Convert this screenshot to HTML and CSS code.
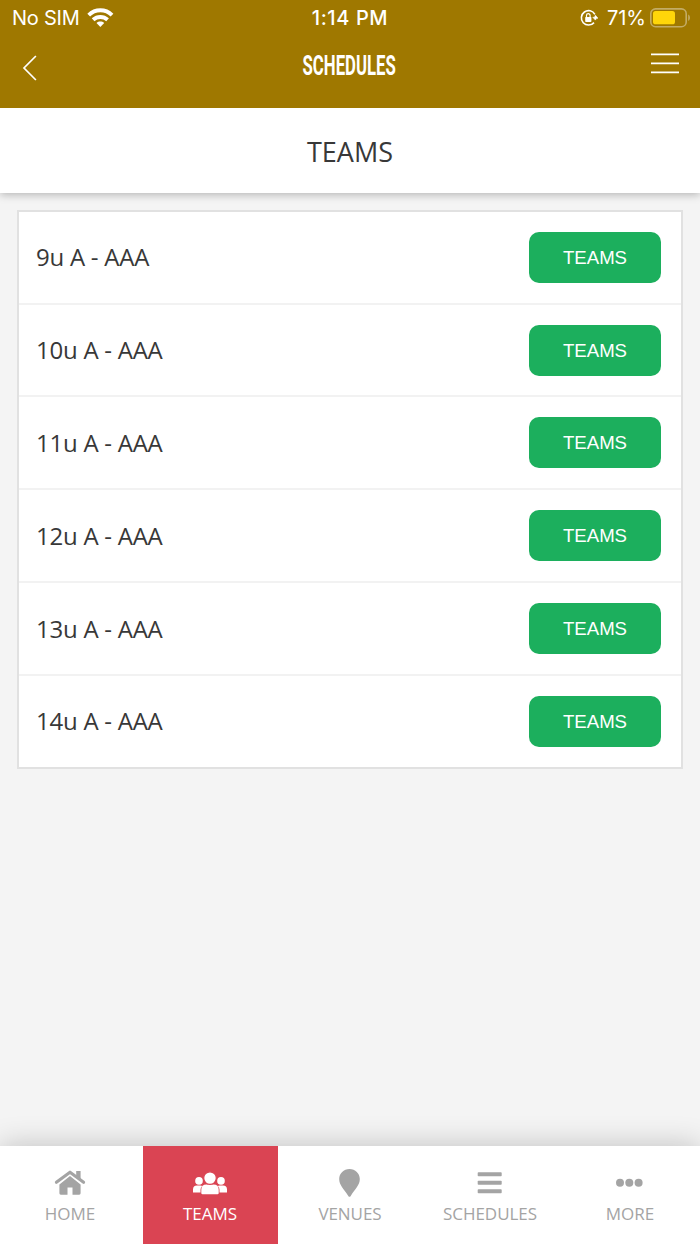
FILE: index.html
```html
<!DOCTYPE html>
<html lang="en">
<head>
<meta charset="utf-8">
<title>Schedules</title>
<link rel="stylesheet" href="styles.css">
</head>
<body>
<div class="app">
  <header class="top">
    <div class="status">
      <div class="carrier"><span class="sim">No SIM</span>
        <svg width="27" height="20" viewBox="0 0 27 20"><g fill="none" stroke="#fff" stroke-width="3.9"><path d="M1.7 7.1C8.2.7 18.5.7 25 7.1"/><path d="M6.1 11.8c4.1-3.8 10.4-3.8 14.5 0"/></g><path d="M9.5 15c2.3-1.9 5.4-1.9 7.7 0l-3.85 4z" fill="#fff"/></svg>
      </div>
      <div class="time">1:14 PM</div>
      <div class="power">
        <svg width="18" height="18" viewBox="0 0 18 18"><path d="M14 13.6A7.2 7.2 0 1 1 14.9 5.4" fill="none" stroke="#fff" stroke-width="1.6"/><path d="M15.4 6.2l2.6 3.1h-1.5l-1.1 1.8-2.6-2.8h1.7z" fill="#fff" stroke="#fff" stroke-width=".6"/><rect x="5.2" y="8" width="6.2" height="4.9" rx=".7" fill="#fff"/><path d="M6.5 8.4V6.5a1.8 1.8 0 0 1 3.6 0v1.9" fill="none" stroke="#fff" stroke-width="1.2"/></svg>
        <span class="percent">71%</span>
        <svg width="42" height="20" viewBox="0 0 42 20"><rect x="1.8" y=".9" width="35.4" height="17.8" rx="4.8" fill="none" stroke="#c3ac66" stroke-width="1.6"/><rect x="4" y="3.1" width="22" height="13.2" rx="2.6" fill="#ffd60a"/><path d="M39.2 6.4c2.3 1 2.3 5.4 0 6.4z" fill="#c3ac66"/></svg>
      </div>
    </div>
    <div class="titlebar">
      <svg class="back" width="16" height="26" viewBox="0 0 16 26"><path d="M13.9 1L2 13l11.9 12" fill="none" stroke="#fff" stroke-width="1.7"/></svg>
      <h1 class="title"><span>SCHEDULES</span></h1>
      <svg class="menu" width="28" height="22" viewBox="0 0 28 22"><path d="M0 1.4h28M0 10.4h28M0 19.4h28" stroke="#fff" stroke-width="1.8"/></svg>
    </div>
  </header>
  <h2 class="section">TEAMS</h2>
  <main class="content">
    <ul class="list">
      <li class="row"><span class="name">9u A - AAA</span><button class="btn">TEAMS</button></li>
      <li class="row"><span class="name">10u A - AAA</span><button class="btn">TEAMS</button></li>
      <li class="row"><span class="name">11u A - AAA</span><button class="btn">TEAMS</button></li>
      <li class="row"><span class="name">12u A - AAA</span><button class="btn">TEAMS</button></li>
      <li class="row"><span class="name">13u A - AAA</span><button class="btn">TEAMS</button></li>
      <li class="row"><span class="name">14u A - AAA</span><button class="btn">TEAMS</button></li>
    </ul>
  </main>
  <nav class="tabs">
    <a class="tab"><svg width="36" height="30" viewBox="0 0 36 30"><path d="M24.2 3h4.4v9.5l-4.4-3.5z"/><path d="M7.4 16.5L18 8.1l10.6 8.4v8.8q0 1.4-1.4 1.4h-6.7v-7.1h-5v7.1H8.8q-1.4 0-1.4-1.4z"/><path d="M4.4 14.3L18 4.2l13.6 10.1" fill="none" stroke="currentColor" stroke-width="3.1" stroke-linecap="round" stroke-linejoin="round"/></svg><span>HOME</span></a>
    <a class="tab active"><svg width="36" height="30" viewBox="0 0 36 30"><circle cx="7" cy="12.9" r="3.8"/><circle cx="29" cy="12.9" r="3.8"/><path d="M1 24.6v-3.2q0-4 4-4h3.1q1.6 0 2.2.7-1.8 1.3-1.8 3.7v2.8zM35 24.6v-3.2q0-4-4-4h-3.1q-1.6 0-2.2.7 1.8 1.3 1.8 3.7v2.8zM9.3 25v-3.3q0-5.2 5.2-5.2h7q5.2 0 5.2 5.2V25q0 1.2-1.2 1.2h-15q-1.2 0-1.2-1.2z"/><circle cx="18" cy="10.1" r="6.3" stroke="#da4453" stroke-width="1.2"/></svg><span>TEAMS</span></a>
    <a class="tab"><svg width="36" height="30" viewBox="0 0 36 30"><path d="M17.5 1c5.8 0 10.3 4.4 10.3 10.1 0 5.9-4.4 9.8-9.1 16.8q-1.2 1.7-2.4 0C11.5 20.9 7.2 17 7.2 11.1 7.2 5.4 11.7 1 17.5 1z"/></svg><span>VENUES</span></a>
    <a class="tab"><svg width="36" height="30" viewBox="0 0 36 30"><rect x="5.7" y="4.2" width="24" height="4.1" rx=".8"/><rect x="5.7" y="12.7" width="24" height="4.1" rx=".8"/><rect x="5.7" y="21.2" width="24" height="4.1" rx=".8"/></svg><span>SCHEDULES</span></a>
    <a class="tab"><svg width="36" height="30" viewBox="0 0 36 30"><circle cx="8" cy="14.8" r="4"/><circle cx="17.3" cy="14.8" r="4"/><circle cx="26.6" cy="14.8" r="4"/></svg><span>MORE</span></a>
  </nav>
</div>
</body>
</html>
```
FILE: styles.css
```css
* { box-sizing: border-box; }
body { margin: 0; background: #f4f4f4; font-family: "Open Sans", sans-serif; color: #383838; }
.app { display: flex; flex-direction: column; height: 1244px; overflow: hidden; }
.top { position: relative; z-index: 1; height: 108px; flex: none; background: #9f7800; color: #fff; }
.status { display: grid; grid-template-columns: 1fr auto 1fr; height: 36px; align-items: center; padding: 0 9px 0 12px; font: 20px/24px Inter, sans-serif; }
.carrier, .power { display: flex; align-items: center; }
.carrier { gap: 8px; }
.sim { letter-spacing: -.25px; }
.time { margin-right: 3px; font-weight: 500; letter-spacing: .6px; }
.power { justify-content: flex-end; }
.percent { margin: 0 3px 0 9px; letter-spacing: 0; }
.titlebar { display: grid; grid-template-columns: 28px 1fr 28px; padding: 0 21px; height: 62px; align-items: center; }
.title { margin: -2px 1px 0 0; text-align: center; font: 700 27px/30px Roboto, sans-serif; }
.title span { display: inline-block; transform: scaleX(.62); }
.back { margin: 1px 0 0 1px; }
.menu { margin-top: -6px; }
.section { position: relative; margin: 0; flex: none; height: 85px; background: #fff; text-align: center; font-weight: 400; font-size: 27px; line-height: 87px; box-shadow: 0 2px 8px rgba(0,0,0,.25); }
.content { flex: 1; padding: 17px; }
.list { margin: 0; padding: 0; list-style: none; background: #fff; border: 2px solid #e1e1e1; }
.row { display: flex; justify-content: space-between; align-items: center; height: 92.9px; padding: 0 20px 0 17px; border-bottom: 2px solid #f2f2f2; }
.row:first-child { height: 92.6px; }
.row:last-child { height: 90.6px; border-bottom: 0; }
.name { margin-top: -1px; font-size: 24px; letter-spacing: -.25px; }
.btn { width: 132px; height: 51px; padding: 1px 0 0; border: 0; border-radius: 10px; background: #1caf5d; color: #fff; font: 18.6px "Liberation Sans", Arial, sans-serif; }
.tabs { position: relative; flex: none; display: grid; grid-template-columns: repeat(5, 140px); height: 98px; background: #fff; box-shadow: 0 0 28px rgba(0,0,0,.22); }
.tab { display: flex; flex-direction: column; align-items: center; padding-top: 22px; color: #a4a4a4; font-size: 17px; line-height: 24px; gap: 4px; }
.tab svg { fill: currentColor; }
.tab span { letter-spacing: -.05px; }
.tab.active { margin: 0 2px 0 3px; padding-right: 1px; background: #da4453; color: #fff; }
```
